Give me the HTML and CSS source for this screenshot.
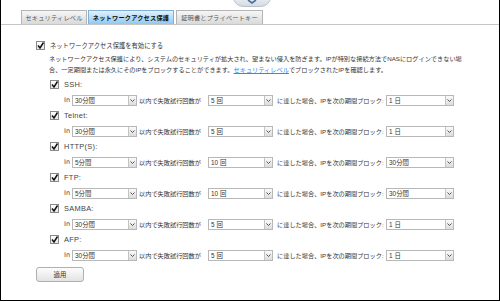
FILE: index.html
```html
<!DOCTYPE html>
<html lang="ja">
<head>
    <meta charset="UTF-8">
    <title>ネットワークアクセス保護</title>
    <link rel="stylesheet" href="styles.css">
</head>
<body>
    <div class="frame">
        <div class="pull">
            <svg width="10" height="5" viewBox="0 0 10 5"><path d="M1 1 L5 4 L9 1" fill="none" stroke="#4a6f9a" stroke-width="1.6"/></svg>
        </div>
        <div class="tabs">
            <div class="tab">セキュリティレベル</div>
            <div class="tab activo">ネットワークアクセス保護</div>
            <div class="tab">証明書とプライベートキー</div>
        </div>

        <div class="contenido">
            <div class="principal">
                <span class="check"><svg viewBox="0 0 9 9"><path d="M2 4.5 L4 7 L7.5 1.5" fill="none" stroke="#111" stroke-width="1.5"/></svg></span>
                <span>ネットワークアクセス保護を有効にする</span>
            </div>
            <p class="desc">ネットワークアクセス保護により、システムのセキュリティが拡大され、望まない侵入を防ぎます。IPが特別な接続方法でNASにログインできない場<br>合、一定期間または永久にそのIPをブロックすることができます。<a href="#">セキュリティレベル</a>でブロックされたIPを確認します。</p>

            <div class="servicios" id="servicios"></div>

            <button class="aplicar">適用</button>
        </div>
    </div>

    <script>
        const servicios = [
            ['SSH:', '30分間', '5 回', '1 日'],
            ['Telnet:', '30分間', '5 回', '1 日'],
            ['HTTP(S):', '5分間', '10 回', '30分間'],
            ['FTP:', '5分間', '10 回', '30分間'],
            ['SAMBA:', '30分間', '5 回', '1 日'],
            ['AFP:', '30分間', '5 回', '1 日']
        ];
        const flecha = '<span class="flecha"><svg width="5" height="3" viewBox="0 0 5 3"><path d="M0.5 0.5 L2.5 2.5 L4.5 0.5" fill="none" stroke="#555" stroke-width="1"/></svg></span>';
        const sel = (v, c) => `<div class="sel ${c}"><span class="val">${v}</span>${flecha}</div>`;
        let html = '';
        servicios.forEach(s => {
            html += `<div class="servicio">
                <div class="cab"><span class="check"><svg viewBox="0 0 9 9"><path d="M2 4.5 L4 7 L7.5 1.5" fill="none" stroke="#111" stroke-width="1.5"/></svg></span><span class="nombre">${s[0]}</span></div>
                <div class="fila"><span class="in">In</span>${sel(s[1], 's1')}<span class="txt">以内で失敗試行回数が</span>${sel(s[2], 's2')}<span class="txt t2">に達した場合、IPを次の期間ブロック:</span>${sel(s[3], 's3')}</div>
            </div>`;
        });
        document.getElementById('servicios').innerHTML = html;
    </script>
</body>
</html>
```

FILE: styles.css
```css
body {
    margin: 0;
    font-family: "Liberation Sans", "Noto Sans CJK JP", sans-serif;
    background: #fff;
    color: #222;
}
.frame {
    position: relative;
    width: 498px;
    height: 300px;
    border: 1px solid #000;
    border-top: none;
    overflow: hidden;
}
.pull {
    position: absolute;
    left: 232px;
    top: -6px;
    width: 38px;
    height: 13px;
    background: linear-gradient(#f2f5f8, #d4dbe3);
    border: 1px solid #b9c2cc;
    border-radius: 0 0 10px 10px;
    display: flex;
    justify-content: center;
    align-items: flex-end;
    padding-bottom: 1px;
    box-sizing: border-box;
}
.pull svg {
    margin-bottom: 1px;
}
.tabs {
    display: flex;
    padding: 10px 0 0 20px;
    height: 14px;
    border-bottom: 1px solid #c6c6c6;
}
.tab {
    width: 66px;
    height: 14px;
    box-sizing: border-box;
    margin-right: 1px;
    border: 1px solid #b4b4b4;
    border-bottom: none;
    background: linear-gradient(#f6f6f6, #d9d9d9);
    font-size: 6.2px;
    color: #555;
    display: flex;
    align-items: center;
    justify-content: center;
    letter-spacing: 0.2px;
}
.tab.activo {
    width: 86px;
    margin-right: 2px;
    background: linear-gradient(#e2f1fc, #8fc9f0);
    border-color: #7fb0d8;
    color: #111;
    font-weight: bold;
}
.tab:last-child {
    width: 87px;
}
.contenido {
    padding: 15px 0 0 35px;
}
.principal {
    display: flex;
    align-items: center;
    height: 11px;
    font-size: 6.3px;
    color: #333;
}
.check {
    width: 9px;
    height: 9px;
    box-sizing: border-box;
    border: 1px solid #8a8a8a;
    background: linear-gradient(#fff, #e8e8e8);
    margin-right: 5px;
    display: inline-flex;
}
.check svg {
    width: 9px;
    height: 9px;
    margin: -1px;
}
.desc {
    margin: 2px 0 0 13px;
    font-size: 6.2px;
    line-height: 11px;
    color: #333;
    white-space: nowrap;
}
.desc a {
    color: #2a8cf0;
}
.servicios {
    margin: 2px 0 0 14px;
}
.servicio .cab {
    display: flex;
    align-items: center;
    height: 15px;
}
.nombre {
    font-size: 7.4px;
    color: #444;
    letter-spacing: 0.3px;
}
.fila {
    display: flex;
    align-items: center;
    height: 16px;
    padding-left: 14px;
    font-size: 6.2px;
    color: #333;
}
.in {
    font-family: "DejaVu Sans", sans-serif;
    font-size: 6.5px;
    color: #444;
    margin-right: 2px;
}
.sel {
    display: flex;
    height: 11px;
    box-sizing: border-box;
    border: 1px solid #b8b8b8;
    background: #fff;
}
.sel .val {
    flex: 1;
    padding-left: 2px;
    font-size: 6.4px;
    line-height: 9px;
}
.flecha {
    width: 7px;
    display: flex;
    align-items: center;
    justify-content: center;
    background: linear-gradient(#fafafa, #dcdcdc);
    border-left: 1px solid #c4c4c4;
}
.s1 {
    width: 65px;
}
.s2 {
    width: 65px;
}
.s3 {
    width: 68px;
}
.txt {
    margin: 0 2px 0 2px;
    width: 67px;
}
.txt.t2 {
    width: 107px;
    margin-left: 4px;
}
.aplicar {
    margin-top: 3px;
    width: 48px;
    height: 15px;
    padding: 0;
    border: 1px solid #b0b0b0;
    border-radius: 3px;
    background: linear-gradient(#fdfdfd, #e2e2e2);
    font-family: inherit;
    font-size: 6.4px;
    color: #333;
}
```
